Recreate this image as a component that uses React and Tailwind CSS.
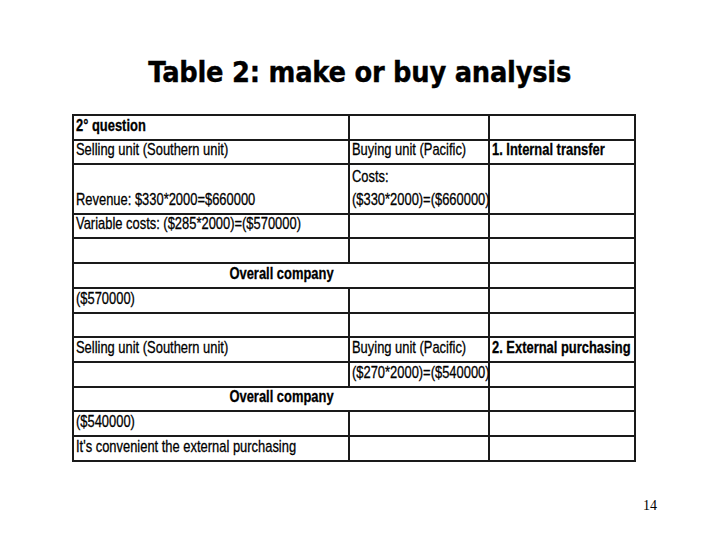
const cell = "border-2 border-[#1a1a1a] pl-[2px] pr-0 pt-0 pb-[4px] align-bottom leading-[18px] whitespace-nowrap overflow-visible";

const rows = [
  { h: "h-[24.7px]", cells: [{ t: "2° question", b: true }, {}, {}] },
  { h: "h-[24.7px]", cells: [{ t: "Selling unit (Southern unit)" }, { t: "Buying unit (Pacific)" }, { t: "1. Internal transfer", b: true }] },
  { h: "h-[49.4px]", cells: [{ t: "Revenue: $330*2000=$660000" }, { t: ["Costs:", "($330*2000)=($660000)"] }, {}] },
  { h: "h-[24.7px]", cells: [{ t: "Variable costs: ($285*2000)=($570000)" }, {}, {}] },
  { h: "h-[24.7px]", cells: [{}, {}, {}] },
  { h: "h-[24.7px]", cells: [{ t: "Overall company", b: true, span: 2 }, {}] },
  { h: "h-[24.7px]", cells: [{ t: "($570000)" }, {}, {}] },
  { h: "h-[24.7px]", cells: [{}, {}, {}] },
  { h: "h-[24.7px]", cells: [{ t: "Selling unit (Southern unit)" }, { t: "Buying unit (Pacific)" }, { t: "2. External purchasing", b: true }] },
  { h: "h-[24.7px]", cells: [{}, { t: "($270*2000)=($540000)" }, {}] },
  { h: "h-[24.7px]", cells: [{ t: "Overall company", b: true, span: 2 }, {}] },
  { h: "h-[24.7px]", cells: [{ t: "($540000)" }, {}, {}] },
  { h: "h-[24.7px]", cells: [{ t: "It's convenient the external purchasing" }, {}, {}] },
];

// Arial Narrow look: Liberation Sans squeezed horizontally
function Narrow({ children, center }) {
  return (
    <span className={`inline-block scale-x-[0.76] ${center ? "origin-center" : "origin-left"}`}>
      {children}
    </span>
  );
}

export default function App() {
  return (
    <div className="w-[720px] h-[540px] bg-white relative text-black">
      <div className="h-[114px] pt-[52px] text-center">
        <h1 className="inline-block scale-x-[0.89] origin-center text-[29px] leading-[40px] font-bold font-['DejaVu_Sans',sans-serif] tracking-[-0.3px] [-webkit-text-stroke:0.4px_black]">
          Table 2: make or buy analysis
        </h1>
      </div>

      <div className="pl-[72px]">
        <table className="table-fixed border-collapse w-[562px] text-[17px] text-black font-['Liberation_Sans',Arial,sans-serif] [-webkit-text-stroke:0.3px_black]">
          <colgroup>
            <col className="w-[276px]" />
            <col className="w-[140px]" />
            <col className="w-[146px]" />
          </colgroup>
          <tbody>
            {rows.map((r, i) => (
              <tr key={i} className={r.h}>
                {r.cells.map((c, j) => (
                  <td
                    key={j}
                    colSpan={c.span || 1}
                    className={`${cell} ${c.b ? "font-bold" : ""} ${c.span ? "text-center" : "text-left"}`}
                  >
                    {Array.isArray(c.t) ? (
                      <div className="flex flex-col gap-[4.7px]">
                        {c.t.map((line, k) => (
                          <div key={k}>
                            <Narrow>{line}</Narrow>
                          </div>
                        ))}
                      </div>
                    ) : c.t ? (
                      <Narrow center={!!c.span}>{c.t}</Narrow>
                    ) : null}
                  </td>
                ))}
              </tr>
            ))}
          </tbody>
        </table>
      </div>

      <div className="absolute left-[643px] top-[495px] text-[14px] font-['Liberation_Serif',serif]">14</div>
    </div>
  );
}
